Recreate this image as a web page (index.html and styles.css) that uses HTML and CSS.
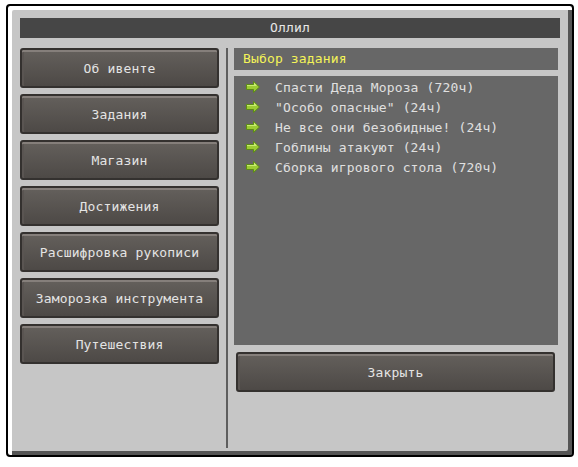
FILE: index.html
```html
<!DOCTYPE html>
<html lang="ru">
<head>
<meta charset="utf-8">
<title>Оллил</title>
<link rel="stylesheet" href="styles.css">
</head>
<body>
<div class="frame">
  <div class="title">Оллил</div>
  <div class="main">
    <div class="menu">
      <div class="btn">Об ивенте</div>
      <div class="btn">Задания</div>
      <div class="btn">Магазин</div>
      <div class="btn">Достижения</div>
      <div class="btn">Расшифровка рукописи</div>
      <div class="btn">Заморозка инструмента</div>
      <div class="btn">Путешествия</div>
    </div>
    <div class="divider"></div>
    <div class="content">
      <div class="header">Выбор задания</div>
      <ul class="list">
        <li class="item"><svg class="arrow" width="14" height="12" viewBox="0 0 14 12"><polygon points="0.5,3.5 7.5,3.5 7.5,0.5 13.5,6 7.5,11.5 7.5,8.5 0.5,8.5" fill="#9ccc34" stroke="#5d8c16" stroke-width="1"/><polygon points="1,4 8,4 8,1.5 10.5,4 10.5,5 1,5" fill="#c8ec70"/></svg><span>Спасти Деда Мороза (720ч)</span></li>
        <li class="item"><svg class="arrow" width="14" height="12" viewBox="0 0 14 12"><polygon points="0.5,3.5 7.5,3.5 7.5,0.5 13.5,6 7.5,11.5 7.5,8.5 0.5,8.5" fill="#9ccc34" stroke="#5d8c16" stroke-width="1"/><polygon points="1,4 8,4 8,1.5 10.5,4 10.5,5 1,5" fill="#c8ec70"/></svg><span>"Особо опасные" (24ч)</span></li>
        <li class="item"><svg class="arrow" width="14" height="12" viewBox="0 0 14 12"><polygon points="0.5,3.5 7.5,3.5 7.5,0.5 13.5,6 7.5,11.5 7.5,8.5 0.5,8.5" fill="#9ccc34" stroke="#5d8c16" stroke-width="1"/><polygon points="1,4 8,4 8,1.5 10.5,4 10.5,5 1,5" fill="#c8ec70"/></svg><span>Не все они безобидные! (24ч)</span></li>
        <li class="item"><svg class="arrow" width="14" height="12" viewBox="0 0 14 12"><polygon points="0.5,3.5 7.5,3.5 7.5,0.5 13.5,6 7.5,11.5 7.5,8.5 0.5,8.5" fill="#9ccc34" stroke="#5d8c16" stroke-width="1"/><polygon points="1,4 8,4 8,1.5 10.5,4 10.5,5 1,5" fill="#c8ec70"/></svg><span>Гоблины атакуют (24ч)</span></li>
        <li class="item"><svg class="arrow" width="14" height="12" viewBox="0 0 14 12"><polygon points="0.5,3.5 7.5,3.5 7.5,0.5 13.5,6 7.5,11.5 7.5,8.5 0.5,8.5" fill="#9ccc34" stroke="#5d8c16" stroke-width="1"/><polygon points="1,4 8,4 8,1.5 10.5,4 10.5,5 1,5" fill="#c8ec70"/></svg><span>Сборка игрового стола (720ч)</span></li>
      </ul>
      <div class="btn close">Закрыть</div>
    </div>
  </div>
</div>
</body>
</html>
```
FILE: styles.css
```css
* { box-sizing: border-box; }
html, body { margin: 0; padding: 0; background: #ffffff; }
body {
  font-family: "DejaVu Sans Mono", "Liberation Mono", monospace;
  font-size: 13px;
  letter-spacing: 0.15px;
  color: #e0e0e0;
}
.frame {
  margin: 4px 0 0 6px;
  width: 568px;
  height: 453px;
  background: #c6c6c6;
  border: 2px solid #000;
  border-radius: 4px;
  box-shadow: inset 4px 4px 0 #ffffff, inset -4px -4px 0 #555555;
  padding: 12px 8px 0 12px;
}
.title {
  height: 20px;
  width: 540px;
  background: #464646;
  text-align: center;
  line-height: 20px;
  color: #e8e8e8;
}
.main {
  display: flex;
  margin-top: 10px;
  height: 400px;
}
.menu {
  width: 199px;
  display: flex;
  flex-direction: column;
  gap: 6px;
}
.btn {
  height: 40px;
  border: 2px solid #34312f;
  border-radius: 3px;
  background: linear-gradient(#64605c, #4d4946);
  box-shadow: inset 0 2px 0 #857f7b, inset 2px 0 0 #5a5552;
  display: flex;
  align-items: center;
  justify-content: center;
  color: #e4e4e4;
}
.divider {
  width: 2px;
  margin: 0 6px 0 7px;
  background: #5e5e5e;
}
.content {
  width: 324px;
  display: flex;
  flex-direction: column;
}
.header {
  height: 22px;
  background: #676767;
  color: #f4f458;
  line-height: 22px;
  padding-left: 9px;
}
.list {
  list-style: none;
  margin: 6px 0 0 0;
  padding: 1px 0 0 0;
  height: 269px;
  background: #676767;
}
.item {
  height: 20px;
  display: flex;
  align-items: center;
  padding-left: 12px;
  color: #e0e0e0;
}
.arrow { margin-right: 15px; flex: none; }
.close {
  margin: 7px 3px 0 2px;
}
```
